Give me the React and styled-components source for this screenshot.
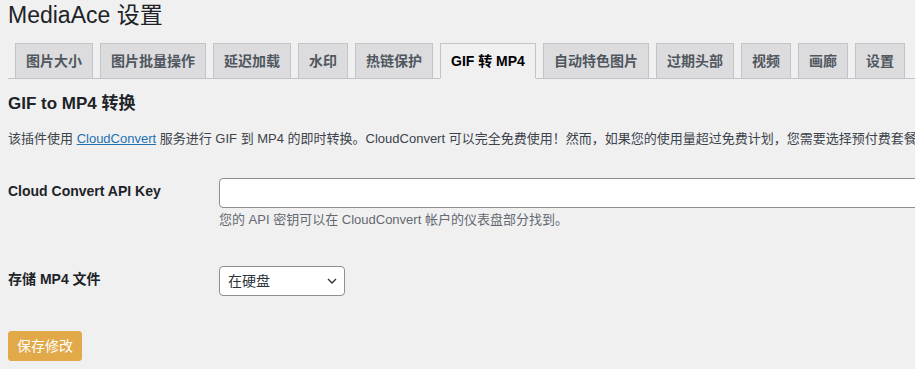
import React from "react";
import styled, { createGlobalStyle } from "styled-components";

const GlobalStyle = createGlobalStyle`
  html, body {
    margin: 0;
    padding: 0;
    background: #f0f0f1;
    overflow: hidden;
  }
  body {
    font-family: "Liberation Sans", "Noto Sans CJK SC", sans-serif;
    color: #3c434a;
  }
`;

const Wrap = styled.div`
  width: 1400px;
  padding-left: 8px;
  display: flex;
  flex-direction: column;
  align-items: flex-start;
`;

const Title = styled.h1`
  margin: 0;
  font-size: 23px;
  font-weight: 400;
  line-height: 30px;
  color: #1d2327;
`;

const TabBar = styled.nav`
  margin-top: 13px;
  display: flex;
  align-items: flex-end;
  align-self: stretch;
  border-bottom: 1px solid #c3c4c7;
`;

const Tab = styled.a`
  margin-left: 7px;
  padding: 5px 10px;
  font-size: 14px;
  font-weight: 700;
  line-height: 24px;
  white-space: nowrap;
  border: 1px solid #c3c4c7;
  border-bottom: ${(p) => (p.$active ? "1px solid #f0f0f1" : "none")};
  margin-bottom: ${(p) => (p.$active ? "-1px" : "0")};
  background: ${(p) => (p.$active ? "#f0f0f1" : "#dcdcde")};
  color: ${(p) => (p.$active ? "#000" : "#50575e")};
  text-decoration: none;
`;

const SectionTitle = styled.h2`
  margin: 14px 0 0;
  font-size: 17px;
  font-weight: 700;
  line-height: 22px;
  color: #1d2327;
`;

const Intro = styled.p`
  margin: 14px 0 0;
  font-size: 13px;
  line-height: 20px;
  white-space: nowrap;
  color: #3c434a;
`;

const Link = styled.a`
  color: #2271b1;
  text-decoration: underline;
`;

const FormRow = styled.div`
  display: grid;
  grid-template-columns: 211px 1fr;
  align-self: stretch;
  margin-top: ${(p) => p.$gap}px;
`;

const Label = styled.label`
  padding-top: 4px;
  font-size: 14px;
  font-weight: 700;
  line-height: 18px;
  color: #1d2327;
`;

const Field = styled.div`
  display: flex;
  flex-direction: column;
  align-items: flex-start;
`;

const TextInput = styled.input`
  box-sizing: border-box;
  width: 820px;
  height: 30px;
  border: 1px solid #8c8f94;
  border-radius: 4px;
  background: #fff;
  padding: 0 8px;
  font-size: 14px;
  font-family: inherit;
  outline: none;
`;

const Description = styled.p`
  margin: 2px 0 0;
  font-size: 13px;
  line-height: 20px;
  color: #646970;
  white-space: nowrap;
`;

const SelectBox = styled.div`
  position: relative;
  width: 126px;
  height: 30px;
`;

const Select = styled.select`
  appearance: none;
  -webkit-appearance: none;
  box-sizing: border-box;
  width: 100%;
  height: 100%;
  border: 1px solid #8c8f94;
  border-radius: 4px;
  background: #fff;
  padding: 0 24px 0 8px;
  font-size: 14px;
  font-family: inherit;
  color: #2c3338;
  outline: none;
`;

const Chevron = styled.svg`
  position: absolute;
  right: 8px;
  top: 12px;
  pointer-events: none;
`;

const SaveButton = styled.button`
  margin-top: 35px;
  box-sizing: border-box;
  height: 30px;
  padding: 0 8px;
  border: 1px solid #e2a949;
  border-radius: 3px;
  background: #e2a949;
  color: #fff;
  font-size: 14px;
  font-family: inherit;
  line-height: 28px;
  cursor: pointer;
`;

const tabs = [
  "图片大小",
  "图片批量操作",
  "延迟加载",
  "水印",
  "热链保护",
  "GIF 转 MP4",
  "自动特色图片",
  "过期头部",
  "视频",
  "画廊",
  "设置",
];

export default function App() {
  return (
    <>
      <GlobalStyle />
      <Wrap>
        <Title>MediaAce 设置</Title>
        <TabBar>
          {tabs.map((t) => (
            <Tab key={t} $active={t === "GIF 转 MP4"}>
              {t}
            </Tab>
          ))}
        </TabBar>
        <SectionTitle>GIF to MP4 转换</SectionTitle>
        <Intro>
          该插件使用 <Link href="#">CloudConvert</Link> 服务进行 GIF 到 MP4 的即时转换。CloudConvert
          可以完全免费使用！然而，如果您的使用量超过免费计划，您需要选择预付费套餐或订阅计划。
        </Intro>
        <FormRow $gap={29}>
          <Label>Cloud Convert API Key</Label>
          <Field>
            <TextInput type="text" />
            <Description>您的 API 密钥可以在 CloudConvert 帐户的仪表盘部分找到。</Description>
          </Field>
        </FormRow>
        <FormRow $gap={36}>
          <Label>存储 MP4 文件</Label>
          <Field>
            <SelectBox>
              <Select defaultValue="disk">
                <option value="disk">在硬盘</option>
              </Select>
              <Chevron width="10" height="6" viewBox="0 0 10 6">
                <polyline
                  points="1,1 5,5 9,1"
                  fill="none"
                  stroke="#2c3338"
                  strokeWidth="1.3"
                />
              </Chevron>
            </SelectBox>
          </Field>
        </FormRow>
        <SaveButton>保存修改</SaveButton>
      </Wrap>
    </>
  );
}
